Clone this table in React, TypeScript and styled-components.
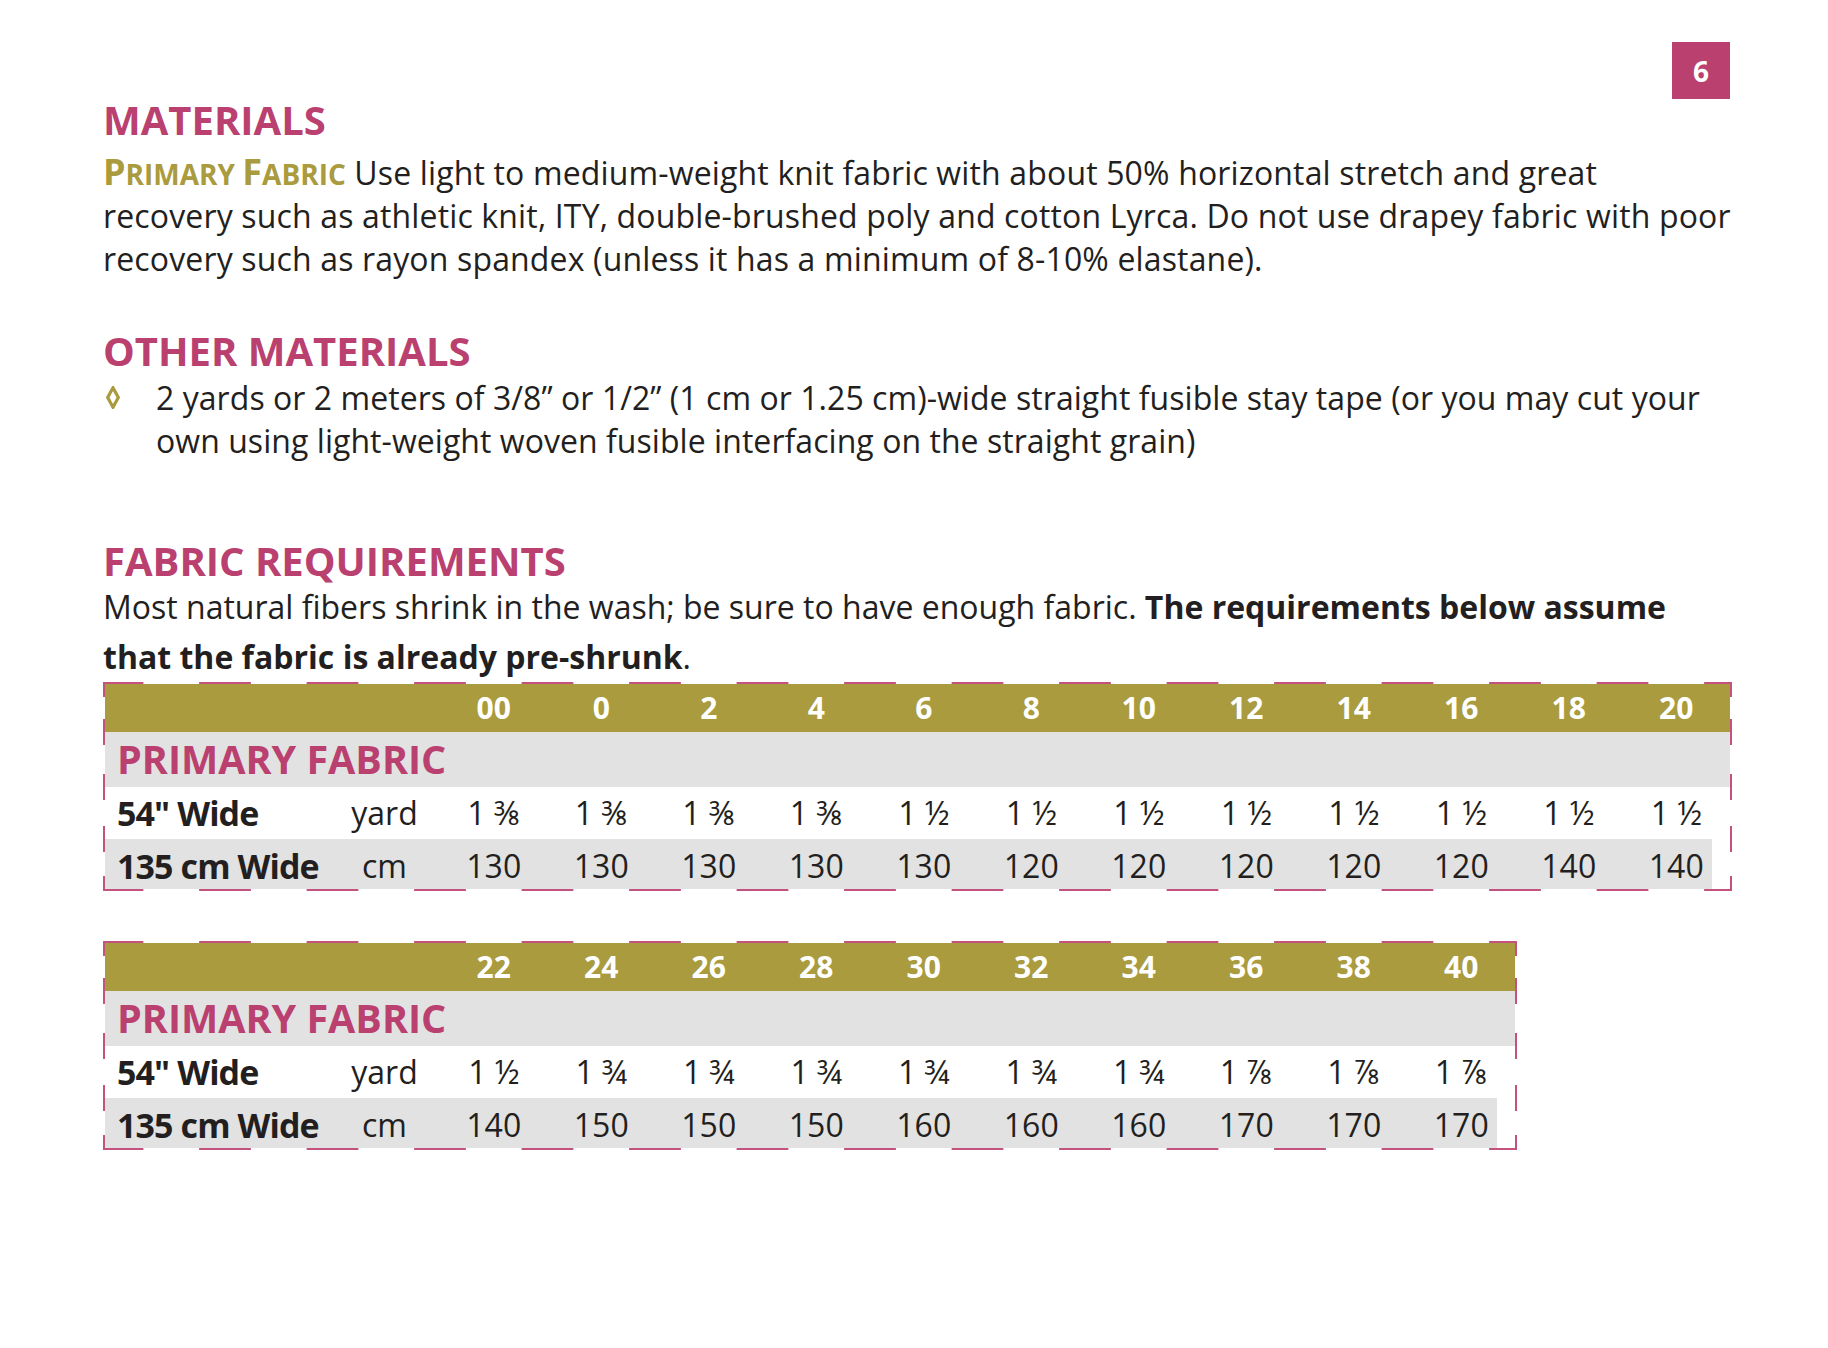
import React from "react";
import styled, { createGlobalStyle } from "styled-components";

const MAGENTA = "#b9406f";
const OLIVE = "#a99b3e";
const GRAY = "#e2e2e2";
const DASH = "#c4527f";
const INK = "#231f20";

const GlobalStyle = createGlobalStyle`
  html, body { margin: 0; padding: 0; background: #ffffff; }
  body { font-family: "Open Sans", "Noto Sans", sans-serif; color: ${INK}; }
`;

const Page = styled.div`
  width: 1627px;
  padding: 42px 0 60px 103px;
`;

const TopBar = styled.div`
  display: flex;
  justify-content: flex-end;
`;

const PageNum = styled.div`
  width: 58px;
  height: 57px;
  background: ${MAGENTA};
  color: #ffffff;
  font-weight: 700;
  font-size: 28px;
  display: flex;
  align-items: center;
  justify-content: center;
`;

const SectionTitle = styled.h2<{ $mt: number }>`
  margin: ${(p) => p.$mt}px 0 0;
  font-size: 40px;
  line-height: 48px;
  font-weight: 700;
  color: ${MAGENTA};
  white-space: nowrap;
`;

const Para = styled.p<{ $mt: number; $lh?: number; $ls?: number }>`
  margin: ${(p) => p.$mt}px 0 0;
  font-size: 32px;
  line-height: ${(p) => p.$lh ?? 43.3}px;
  letter-spacing: ${(p) => p.$ls ?? 0}px;
  white-space: nowrap;
`;

const Lead = styled.span`
  font-weight: 700;
  font-size: 28px;
  line-height: 1;
  letter-spacing: 0;
  color: ${OLIVE};
`;

const LeadCap = styled.span`
  font-size: 36px;
`;

const Strong = styled.strong`
  font-weight: 700;
`;

const BulletList = styled.ul<{ $mt: number }>`
  list-style: none;
  margin: ${(p) => p.$mt}px 0 0;
  padding: 0;
`;

const BulletItem = styled.li`
  display: grid;
  grid-template-columns: 53px 1fr;
  font-size: 32px;
  line-height: 43.3px;
  letter-spacing: 0.05px;
  white-space: nowrap;
`;

const BulletMark = styled.span`
  height: 43.3px;
  display: flex;
  align-items: center;
  padding-left: 3px;
`;

const Diamond = () => (
  <svg width="14" height="23" viewBox="0 0 14 23">
    <polygon points="7,1.8 12.3,11.5 7,21.2 1.7,11.5" fill="none" stroke={OLIVE} strokeWidth="3.2" strokeLinejoin="miter" />
  </svg>
);

/* ---------- table ---------- */

const LABEL_W = 224;
const UNIT_W = 111;
const COL_W = 107.5;
const ROWS = [48, 55, 52, 50];
const B = 2;

function sideDashes(): string {
  const total = B * 2 + ROWS.reduce((a, b) => a + b, 0);
  const bounds: number[] = [B];
  ROWS.reduce((acc, h) => {
    bounds.push(acc + h);
    return acc + h;
  }, B);
  const segs: [number, number][] = bounds.map((b, i) => {
    if (i === 0) return [0, 15];
    if (i === bounds.length - 1) return [total - 15, total];
    return [b - 13, b + 13];
  });
  const stops: string[] = [];
  let cur = 0;
  segs.forEach(([a, b]) => {
    stops.push(`transparent ${cur}px ${a}px`);
    stops.push(`${DASH} ${a}px ${b}px`);
    cur = b;
  });
  stops.push(`transparent ${cur}px ${total}px`);
  return `linear-gradient(to bottom, ${stops.join(", ")})`;
}

const SIDE = sideDashes();
const TOPDASH = `linear-gradient(to right, ${DASH} 0 26px, transparent 26px 81.5px, ${DASH} 81.5px ${COL_W}px)`;

const TableFrame = styled.div<{ $cols: number; $mt: number }>`
  margin-top: ${(p) => p.$mt}px;
  width: ${(p) => LABEL_W + UNIT_W + p.$cols * COL_W + B * 2}px;
  padding: ${B}px;
  box-sizing: border-box;
  display: grid;
  grid-template-columns: ${LABEL_W}px ${UNIT_W}px repeat(${(p) => p.$cols}, ${COL_W}px);
  grid-template-rows: ${ROWS.map((r) => `${r}px`).join(" ")};
  background-color: #ffffff;
  background-image: ${TOPDASH}, ${TOPDASH}, ${SIDE}, ${SIDE};
  background-size: ${COL_W}px ${B}px, ${COL_W}px ${B}px, ${B}px 100%, ${B}px 100%;
  background-position: ${B + LABEL_W + UNIT_W}px 0, ${B + LABEL_W + UNIT_W}px 100%, 0 0, 100% 0;
  background-repeat: repeat-x, repeat-x, no-repeat, no-repeat;
`;

const HeadCell = styled.div`
  background: ${OLIVE};
  color: #ffffff;
  font-weight: 700;
  font-size: 30px;
  line-height: 48px;
  text-align: center;
`;

const GroupCell = styled.div`
  grid-column: 1 / -1;
  background: ${GRAY};
  color: ${MAGENTA};
  font-weight: 700;
  font-size: 39.5px;
  line-height: 55px;
  padding-left: 12px;
  white-space: nowrap;
`;

const DataCell = styled.div<{ $shade: boolean; $lh: number; $kind: "label" | "unit" | "value"; $short?: boolean }>`
  background: ${(p) =>
    p.$shade
      ? p.$short
        ? `linear-gradient(${GRAY}, ${GRAY}) left top / calc(100% - 18px) 100% no-repeat`
        : GRAY
      : "transparent"};
  line-height: ${(p) => p.$lh}px;
  white-space: nowrap;
  font-size: ${(p) => (p.$kind === "label" ? 34 : 32)}px;
  font-weight: ${(p) => (p.$kind === "label" ? 700 : 400)};
  letter-spacing: ${(p) => (p.$kind === "label" ? -0.9 : 0)}px;
  text-align: ${(p) => (p.$kind === "label" ? "left" : "center")};
  padding-left: ${(p) => (p.$kind === "label" ? 12 : 0)}px;
  color: ${INK};
`;

type TableProps = { sizes: string[]; yards: string[]; cms: string[]; mt: number };

function FabricTable({ sizes, yards, cms, mt }: TableProps) {
  return (
    <TableFrame $cols={sizes.length} $mt={mt}>
      <HeadCell />
      <HeadCell />
      {sizes.map((s) => (
        <HeadCell key={s}>{s}</HeadCell>
      ))}
      <GroupCell>PRIMARY FABRIC</GroupCell>
      <DataCell $shade={false} $lh={52} $kind="label">54" Wide</DataCell>
      <DataCell $shade={false} $lh={52} $kind="unit">yard</DataCell>
      {yards.map((y, i) => (
        <DataCell key={i} $shade={false} $lh={52} $kind="value">{y}</DataCell>
      ))}
      <DataCell $shade $lh={54} $kind="label">135 cm Wide</DataCell>
      <DataCell $shade $lh={54} $kind="unit">cm</DataCell>
      {cms.map((c, i) => (
        <DataCell key={i} $shade $lh={54} $kind="value" $short={i === cms.length - 1}>{c}</DataCell>
      ))}
    </TableFrame>
  );
}

export default function App() {
  return (
    <Page>
      <GlobalStyle />
      <TopBar>
        <PageNum>6</PageNum>
      </TopBar>

      <SectionTitle $mt={-3.5}>MATERIALS</SectionTitle>
      <Para $mt={7.4} $ls={0.15}>
        <Lead>
          <LeadCap>P</LeadCap>RIMARY <LeadCap>F</LeadCap>ABRIC
        </Lead>{" "}
        Use light to medium-weight knit fabric with about 50% horizontal stretch and great
        <br />
        recovery such as athletic knit, ITY, double-brushed poly and cotton Lyrca. Do not use drapey fabric with poor
        <br />
        recovery such as rayon spandex (unless it has a minimum of 8-10% elastane).
      </Para>

      <SectionTitle $mt={46.4}>OTHER MATERIALS</SectionTitle>
      <BulletList $mt={0.8}>
        <BulletItem>
          <BulletMark>
            <Diamond />
          </BulletMark>
          <span>
            2 yards or 2 meters of 3/8” or 1/2” (1 cm or 1.25 cm)-wide straight fusible stay tape (or you may cut your
            <br />
            own using light-weight woven fusible interfacing on the straight grain)
          </span>
        </BulletItem>
      </BulletList>

      <SectionTitle $mt={74.6}>FABRIC REQUIREMENTS</SectionTitle>
      <Para $mt={-3.2} $lh={49.7}>
        Most natural fibers shrink in the wash; be sure to have enough fabric. <Strong>The requirements below assume</Strong>
        <br />
        <Strong>that the fabric is already pre-shrunk</Strong>.
      </Para>

      <FabricTable
        mt={1}
        sizes={["00", "0", "2", "4", "6", "8", "10", "12", "14", "16", "18", "20"]}
        yards={["1 ⅜", "1 ⅜", "1 ⅜", "1 ⅜", "1 ½", "1 ½", "1 ½", "1 ½", "1 ½", "1 ½", "1 ½", "1 ½"]}
        cms={["130", "130", "130", "130", "130", "120", "120", "120", "120", "120", "140", "140"]}
      />
      <FabricTable
        mt={50}
        sizes={["22", "24", "26", "28", "30", "32", "34", "36", "38", "40"]}
        yards={["1 ½", "1 ¾", "1 ¾", "1 ¾", "1 ¾", "1 ¾", "1 ¾", "1 ⅞", "1 ⅞", "1 ⅞"]}
        cms={["140", "150", "150", "150", "160", "160", "160", "170", "170", "170"]}
      />
    </Page>
  );
}
